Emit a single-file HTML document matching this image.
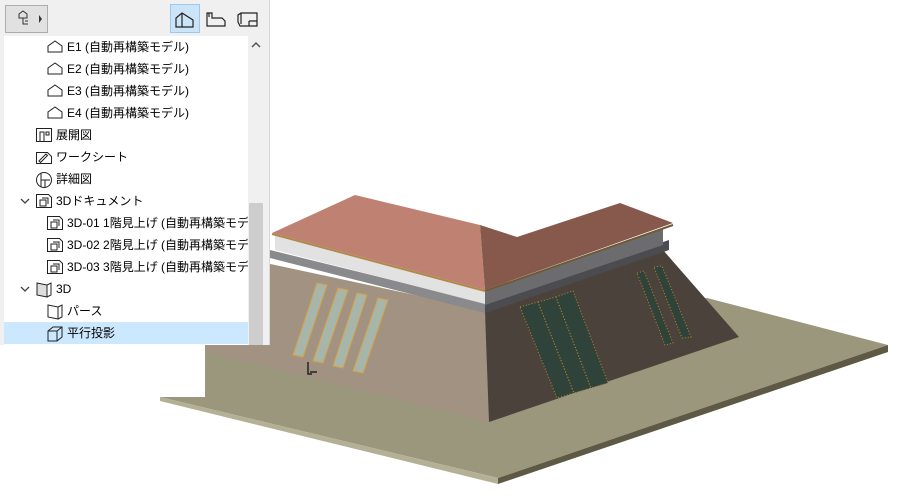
<!DOCTYPE html>
<html><head><meta charset="utf-8"><style>
*{margin:0;padding:0;box-sizing:border-box}
body{width:909px;height:496px;background:#fff;position:relative;overflow:hidden;font-family:"Liberation Sans","Noto Sans CJK JP",sans-serif;font-size:12px;color:#000}
svg.scene{position:absolute;left:0;top:0}
#panel{position:absolute;left:0;top:0;width:270px;height:345px;background:#f0f0f0;border-right:1px solid #d8d8d8}
#tree{position:absolute;left:4px;top:36px;width:244px;height:309px;background:#fff}
.row{position:absolute;left:0;width:244px;height:22px;line-height:22px;white-space:nowrap;overflow:hidden}
.row svg{position:absolute;top:3px}
.sel{background:#cce8ff}
.btn{position:absolute}
</style></head><body>
<svg class="scene" width="909" height="496" viewBox="0 0 909 496">
<!-- ground -->
<polygon points="160,397 498,478 888,345 707,298 205,345 205,397" fill="#9a977c"/>
<polygon points="160,397 498,478 498,484 160,401" fill="#b4b096"/>
<polygon points="498,478 888,345 888,352 498,484" fill="#5e5944"/>
<!-- left wall -->
<polygon points="205,250 485,310 489,422 205,352" fill="#a29282"/>
<!-- right wall -->
<polygon points="485,312 663,250 739,337 489,422" fill="#4b423b"/>
<!-- gray bands -->
<polygon points="270,250 485,303 485,313 270,258" fill="#8a8a8c"/>
<polygon points="485,303 669,240 669,250 485,313" fill="#4c4c50"/>
<!-- fascia -->
<polygon points="275,236 485,290 485,304 275,250" fill="#e2e2e2"/>
<polygon points="485,292 663,228 663,245 485,305" fill="#6c6c6e"/>
<!-- roof -->
<polygon points="272,233 355,195 480,225 485,290" fill="#bf8272"/>
<polygon points="480,225 517,237 620,203 673,223 485,290" fill="#87594c"/>
<line x1="272" y1="234" x2="485" y2="291" stroke="#b08a48" stroke-width="2"/>
<line x1="485" y1="291" x2="673" y2="225" stroke="#6e5a34" stroke-width="2"/>
<!-- left windows -->
<g fill="#a6b6aa" stroke="#d9a040" stroke-width="1">
<polygon points="317,283 327,285 303,357 293,355"/>
<polygon points="338,288 348,290 323,363 313,361"/>
<polygon points="357,293 367,295 343,368 333,366"/>
<polygon points="378,298 388,300 363,373 353,371"/>
</g>
<!-- right windows -->
<g fill="#2f433a" stroke="#b88830" stroke-width="1" stroke-dasharray="1 2">
<polygon points="520,307 538,302 574,393 557,398"/>
<polygon points="538,302 556,297 591,388 574,393"/>
<polygon points="556,297 573,291 608,383 591,388"/>
<polygon points="637,273 644,271 673,343 665,345"/>
<polygon points="654,267 662,266 691,337 682,338"/>
</g>
<path d="M308 362 v12 h4 M310 372 h7" stroke="#222" stroke-width="1.5" fill="none"/>
</svg>
<div id="panel">
 <div class="btn" style="left:5px;top:5px;width:43px;height:28px;border:1px solid #adadad;background:#e1e1e1">
  <svg width="41" height="26"><g fill="none" stroke="#333"><path d="M13 8 l4 -3 4 3 v4 h-8z M17 12 v6 h4 M19 15 h3 M19 18 h3"/></g><path d="M33 9 l3 4 -3 4z" fill="#333"/></svg>
 </div>
 <div class="btn" style="left:170px;top:4px;width:30px;height:29px;background:#cce4f7;border:1px solid #99c9ef">
  <svg width="28" height="27"><path d="M5 22 V13 L11 8 L22 15 V22 Z M11 8 V22" fill="none" stroke="#222" stroke-width="1.2"/></svg>
 </div>
 <div class="btn" style="left:203px;top:4px;width:28px;height:29px"><svg width="28" height="29"><path d="M4 22 V9 H9 V14 H13 V14 L19 14 L22 17 V22 Z M6 9 v4" fill="none" stroke="#222" stroke-width="1.2"/></svg></div>
 <div class="btn" style="left:234px;top:4px;width:28px;height:29px"><svg width="28" height="29"><path d="M6 22 L4 18 V11 L7 9 H23 V22 Z M7 9 V20 M15 17 h8 M15 17 v5" fill="none" stroke="#222" stroke-width="1.2"/></svg></div>
 <div style="position:absolute;left:250px;top:36px;width:14px;height:309px;background:#f0f0f0"></div>
 <div style="position:absolute;left:249px;top:203px;width:14px;height:142px;background:#cdcdcd"></div>
 <svg style="position:absolute;left:250px;top:40px" width="12" height="10"><path d="M2 7 l4 -4 4 4" fill="none" stroke="#555" stroke-width="1.5"/></svg>
 <div id="tree">
  <div class="row" style="top:0px"><svg style="left:42px" width="18" height="16"><path d="M2 13 V7 L9 2 L16 7 V13 Z" fill="none" stroke="#222"/></svg><span style="position:absolute;left:63px">E1 (自動再構築モデル)</span></div>
  <div class="row" style="top:22px"><svg style="left:42px" width="18" height="16"><path d="M2 13 V7 L9 2 L16 7 V13 Z" fill="none" stroke="#222"/></svg><span style="position:absolute;left:63px">E2 (自動再構築モデル)</span></div>
  <div class="row" style="top:44px"><svg style="left:42px" width="18" height="16"><path d="M2 13 V7 L9 2 L16 7 V13 Z" fill="none" stroke="#222"/></svg><span style="position:absolute;left:63px">E3 (自動再構築モデル)</span></div>
  <div class="row" style="top:66px"><svg style="left:42px" width="18" height="16"><path d="M2 13 V7 L9 2 L16 7 V13 Z" fill="none" stroke="#222"/></svg><span style="position:absolute;left:63px">E4 (自動再構築モデル)</span></div>
  <div class="row" style="top:88px"><svg style="left:31px" width="18" height="16"><path d="M1.5 1.5 h15 v13 h-15z M5 14 V5 h4 v9 M11 5 h3 v3 h-3z" fill="none" stroke="#222"/></svg><span style="position:absolute;left:52px">展開図</span></div>
  <div class="row" style="top:110px"><svg style="left:31px" width="18" height="16"><path d="M1.5 14.5 V3.5 h11 l4 4 v7z M4 12 l7 -7 1.5 1.5 -7 7 z" fill="none" stroke="#222"/></svg><span style="position:absolute;left:52px">ワークシート</span></div>
  <div class="row" style="top:132px"><svg style="left:31px" width="18" height="18"><circle cx="9" cy="9" r="7.5" fill="none" stroke="#222"/><path d="M6 2 v14 M6 9 h9 M10 9 v7" fill="none" stroke="#222"/></svg><span style="position:absolute;left:52px">詳細図</span></div>
  <div class="row" style="top:154px"><svg style="left:16px;top:7px" width="10" height="8"><path d="M1 2 l4 4 4 -4" fill="none" stroke="#444" stroke-width="1.3"/></svg><svg style="left:31px" width="18" height="16"><path d="M1.5 1.5 h12 l3 3 v10 h-15z M5 7 h6 v6 h-6z M7 5 h6 v6" fill="none" stroke="#222"/></svg><span style="position:absolute;left:52px">3Dドキュメント</span></div>
  <div class="row" style="top:176px"><svg style="left:42px" width="18" height="16"><path d="M1.5 1.5 h12 l3 3 v10 h-15z M5 7 h6 v6 h-6z M7 5 h6 v6" fill="none" stroke="#222"/></svg><span style="position:absolute;left:63px">3D-01 1階見上げ (自動再構築モデル)</span></div>
  <div class="row" style="top:198px"><svg style="left:42px" width="18" height="16"><path d="M1.5 1.5 h12 l3 3 v10 h-15z M5 7 h6 v6 h-6z M7 5 h6 v6" fill="none" stroke="#222"/></svg><span style="position:absolute;left:63px">3D-02 2階見上げ (自動再構築モデル)</span></div>
  <div class="row" style="top:220px"><svg style="left:42px" width="18" height="16"><path d="M1.5 1.5 h12 l3 3 v10 h-15z M5 7 h6 v6 h-6z M7 5 h6 v6" fill="none" stroke="#222"/></svg><span style="position:absolute;left:63px">3D-03 3階見上げ (自動再構築モデル)</span></div>
  <div class="row" style="top:242px"><svg style="left:16px;top:7px" width="10" height="8"><path d="M1 2 l4 4 4 -4" fill="none" stroke="#444" stroke-width="1.3"/></svg><svg style="left:31px" width="18" height="18"><path d="M2 2 L12 4 V16 L2 14 Z" fill="#ddd" stroke="#222"/><path d="M12 4 L16 2 V14 L12 16" fill="none" stroke="#222"/></svg><span style="position:absolute;left:52px">3D</span></div>
  <div class="row" style="top:264px"><svg style="left:42px" width="18" height="18"><path d="M2 2 L12 4 V16 L2 14 Z M12 4 L16 2 V14 L12 16" fill="none" stroke="#222"/></svg><span style="position:absolute;left:63px">パース</span></div>
  <div class="row sel" style="top:286px"><svg style="left:42px" width="18" height="18"><path d="M2 6 L7 2 H16 V12 L11 16 H2 Z M2 6 H11 V16 M11 6 L16 2" fill="none" stroke="#222"/></svg><span style="position:absolute;left:63px">平行投影</span></div>
 </div>
</div>
</body></html>
